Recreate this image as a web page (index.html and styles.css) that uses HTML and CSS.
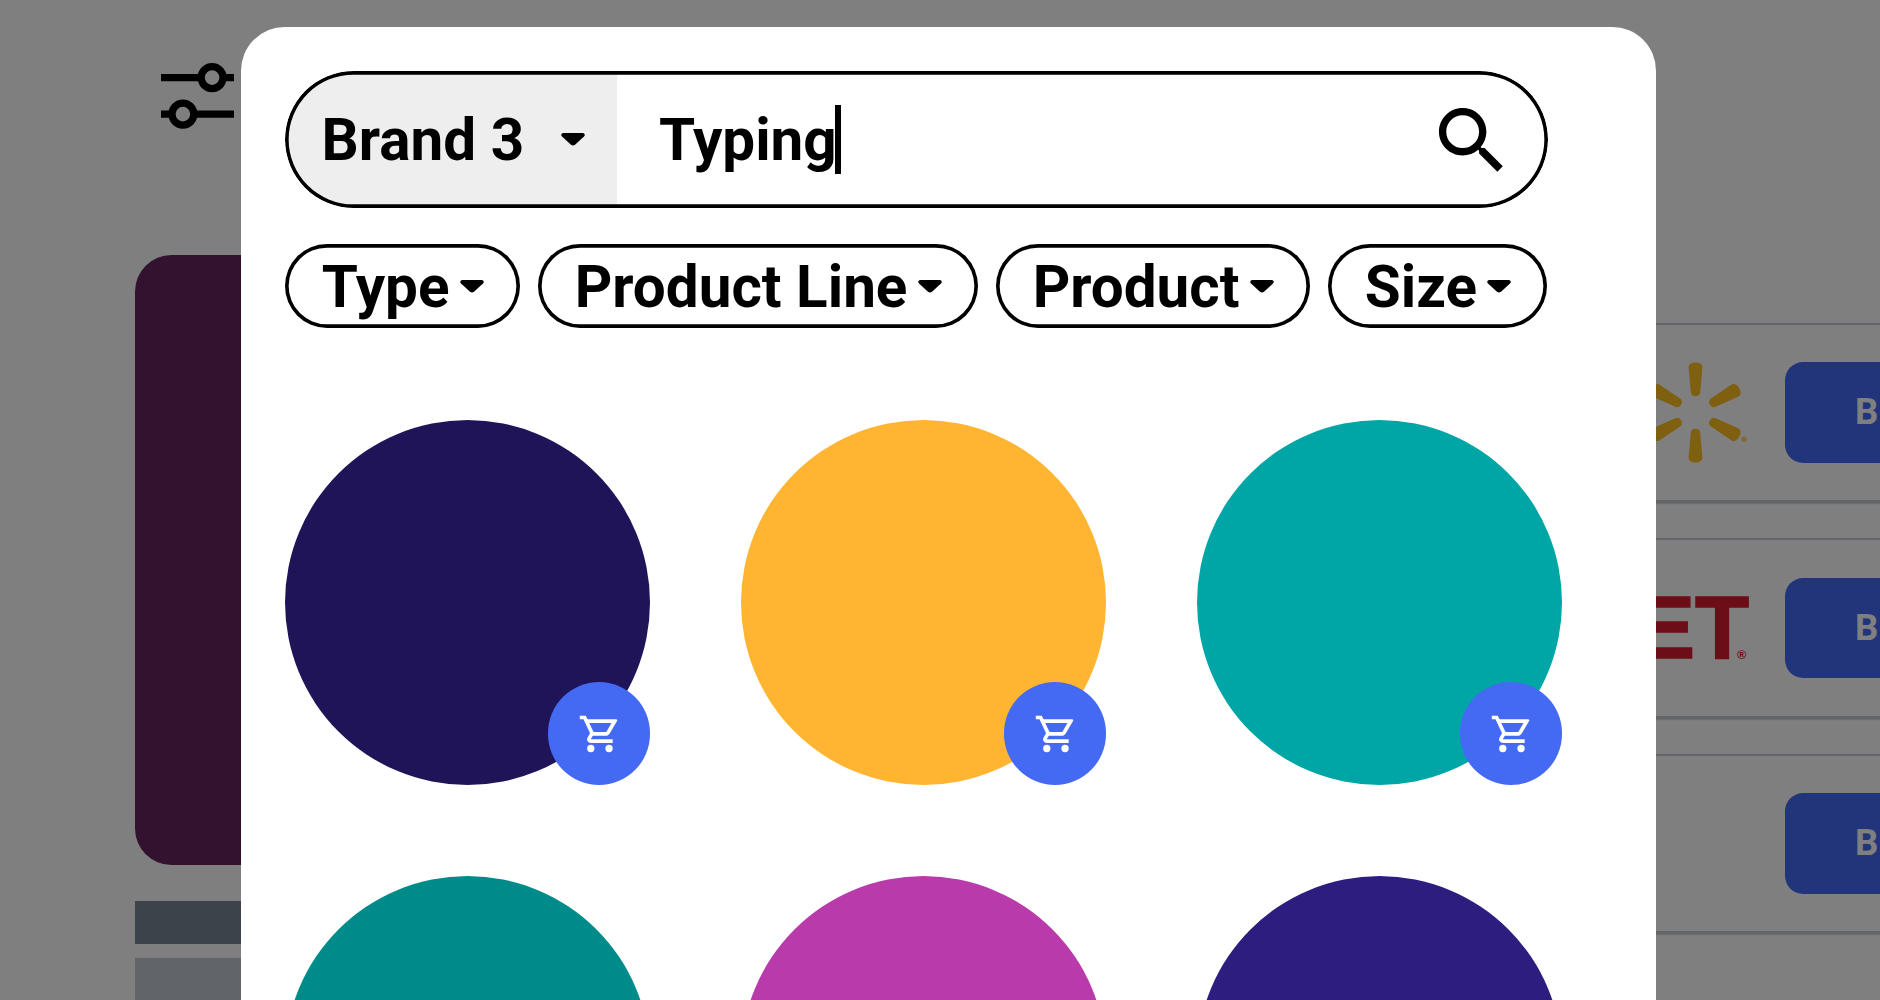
FILE: index.html
```html
<!DOCTYPE html>
<html lang="en">
<head>
<meta charset="utf-8">
<title>Product search</title>
<link rel="stylesheet" href="styles.css">
</head>
<body>
<svg class="defs" width="0" height="0" aria-hidden="true">
  <symbol id="cart" viewBox="0 0 24 24">
    <path fill-rule="evenodd" d="M1 2h3.27l.94 2H21Q21.900 4.300 21.400 5L17.300 11.970C16.960 12.590 16.300 13 15.550 13H8.100L7 15h12v2H7c-1.520 0-2.480-1.630-1.750-2.970l1.350-2.440L3 4H1zM6.160 6h12.150l-2.760 5H8.530z"/>
    <circle cx="7" cy="20" r="2"/><circle cx="17" cy="20" r="2"/>
  </symbol>
  <symbol id="caret" viewBox="0 0 24 13">
    <path d="M2 0H22Q24 .4 23.8 2.2L23 3.6 14 11.8Q12 13.4 10 11.8L1 3.6 .2 2.2Q0 .4 2 0z"/>
  </symbol>
</svg>
<div class="page">
  <aside class="sidebar">
    <svg class="tune" viewBox="0 0 20 18" fill="none" stroke="#000" stroke-width="2">
      <path d="M0 4H11M17 4H20M0 14H3M9 14H20"/><circle cx="14" cy="4" r="3"/><circle cx="6" cy="14" r="3"/>
    </svg>
    <div class="hero"></div>
    <div class="bar bar-dark"></div>
    <div class="bar bar-light"></div>
  </aside>
  <section class="stores">
    <div class="store">
      <svg class="spark" viewBox="-52 -52 104 104">
        <g id="pair"><path id="ray" d="M-7-46Q-6.500-50.500 0-50.500Q6.500-50.500 7-46L4.700-20Q4-16.500 0-16.500Q-4-16.500-4.700-20z"/><use href="#ray" transform="rotate(180)"/></g>
        <use href="#pair" transform="rotate(61)"/><use href="#pair" transform="rotate(-61)"/>
        <circle cx="49" cy="27" r="2.700" opacity=".65"/>
      </svg>
      <div class="buy">B</div>
    </div>
    <div class="store">
      <div class="brand">ET<span class="reg">®</span></div>
      <div class="buy">B</div>
    </div>
    <div class="store"><div class="buy">B</div></div>
  </section>
</div>
<div class="overlay">
  <main class="modal">
    <div class="search">
      <div class="scope"><span>Brand 3</span><svg class="caret"><use href="#caret"/></svg></div>
      <div class="query"><span>Typing</span><i class="cursor"></i></div>
      <svg class="lens" viewBox="0 0 24 24"><path d="M15.500 14h-.79l-.28-.27C15.410 12.590 16 11.110 16 9.500 16 5.910 13.090 3 9.500 3S3 5.910 3 9.500 5.910 16 9.500 16c1.610 0 3.090-.59 4.230-1.570l.27.28v.79l5 4.990L20.490 19l-4.990-5zm-6 0C7.010 14 5 11.990 5 9.500S7.010 5 9.500 5 14 7.010 14 9.500 11.990 14 9.500 14z"/></svg>
    </div>
    <div class="filters">
      <div class="pill">Type<svg class="caret"><use href="#caret"/></svg></div>
      <div class="pill">Product Line<svg class="caret"><use href="#caret"/></svg></div>
      <div class="pill">Product<svg class="caret"><use href="#caret"/></svg></div>
      <div class="pill">Size<svg class="caret"><use href="#caret"/></svg></div>
    </div>
    <div class="grid">
      <div class="swatch navy"><div class="add"><svg><use href="#cart"/></svg></div></div>
      <div class="swatch amber"><div class="add"><svg><use href="#cart"/></svg></div></div>
      <div class="swatch teal"><div class="add"><svg><use href="#cart"/></svg></div></div>
      <div class="swatch green"></div>
      <div class="swatch magenta"></div>
      <div class="swatch indigo"></div>
    </div>
  </main>
</div>
</body>
</html>
```
FILE: styles.css
```css
* { box-sizing: border-box; }
body {
  margin: 0;
  width: 1880px;
  height: 1000px;
  overflow: hidden;
  position: relative;
  background: #fff;
  font-family: Roboto, "Liberation Sans", sans-serif;
  font-weight: 700;
  color: #000;
}
svg { display: block; flex: none; }
.defs { position: absolute; }

.page { display: flex; height: 1000px; overflow: hidden; padding-left: 135.3px; }
.sidebar { width: 700px; flex: none; padding-top: 62.7px; }
.tune { width: 73px; height: 65.7px; margin-left: 25.7px; overflow: visible; }
.hero { height: 609.4px; margin-top: 127.1px; border-radius: 36.5px; background: #66245e; }
.bar { height: 42.2px; }
.bar-dark { margin-top: 36.5px; background: #7a8696; }
.bar-light { margin-top: 14.6px; background: #c2cbd2; }

.stores { flex: none; width: 1200px; padding-top: 323px; display: flex; flex-direction: column; gap: 35px; }
.store {
  height: 180.4px;
  display: flex;
  align-items: center;
  position: relative;
  border-top: 2px solid #c4cdd4;
  border-bottom: 3px solid #c4cdd4;
  box-shadow: 0 1px 1px #d8dcdf;
}
.buy {
  width: 240px;
  height: 100.5px;
  margin: 0 0 .4px 950px;
  padding-left: 69.7px;
  border-radius: 18.25px;
  background: #446af4;
  color: #fff;
  font-size: 36.5px;
  line-height: 100px;
}
.spark { width: 103px; height: 103px; fill: #ffc020; margin: 0 .5px 0 808.5px; overflow: visible; }
.spark + .buy { margin-left: 38px; }
.brand {
  width: 130px;
  height: 100px;
  margin-left: 784.7px;
  padding: 0 0 0 16px;
  color: #da1b2e;
  font: 700 88.5px/100px "Liberation Sans", sans-serif;
  -webkit-text-stroke: 1.5px #da1b2e;
  text-align: left;
  white-space: nowrap;
  position: relative;
}
.reg {
  position: absolute;
  left: 117px;
  top: 70px;
  font-size: 12.5px;
  line-height: 14px;
  -webkit-text-stroke: 0;
}
.brand + .buy { margin-left: 35.3px; }

.overlay {
  position: absolute;
  inset: 0;
  background: rgba(0, 0, 0, .5);
  padding: 27.3px 0 0 241.3px;
  overflow: hidden;
}
.modal {
  width: 1414.6px;
  height: 1100px;
  padding: 43.8px;
  border-radius: 43.8px;
  background: #fff;
}
.search {
  width: 1262.6px;
  height: 136.9px;
  display: flex;
  align-items: center;
  border-radius: 69px;
  overflow: hidden;
  font-size: 58.4px;
  line-height: 68px;
  position: relative;
}
.search::after, .pill::after {
  content: "";
  position: absolute;
  inset: 0;
  border-radius: inherit;
  box-shadow: inset 0 0 0 3.65px #000;
}
.scope {
  width: 331.9px;
  height: 100%;
  padding: 0 31.5px 0 36.5px;
  display: flex;
  align-items: center;
  justify-content: space-between;
  background: #eee;
}
.caret { width: 24px; height: 13px; }
.query { flex: 1; padding-left: 42px; display: flex; align-items: center; }
.cursor { width: 6px; height: 69.5px; margin-left: -2.2px; background: #000; }
.lens { width: 87.6px; height: 87.6px; margin: 2px 31.8px 0 0; }

.filters { display: flex; gap: 18.25px; margin-top: 36.4px; }
.pill {
  height: 84px;
  display: flex;
  align-items: center;
  gap: 10.3px;
  padding: 1px 36px 0 36.7px;
  border-radius: 42px;
  font-size: 58.4px;
  line-height: 84px;
  white-space: nowrap;
  position: relative;
}

.grid { display: grid; grid-template-columns: repeat(3, 365px); gap: 91.25px 91px; margin-top: 91.3px; }
.swatch { height: 365px; border-radius: 50%; display: flex; align-items: flex-end; justify-content: flex-end; }
.add {
  width: 102.2px;
  height: 102.2px;
  border-radius: 50%;
  background: #446af4;
  display: flex;
  align-items: center;
  justify-content: center;
  padding-left: 2.5px;
}
.add svg { width: 43.8px; height: 43.8px; fill: #fff; }
.navy { background: #201458; }
.amber { background: #ffb531; }
.teal { background: #00a6a6; }
.green { background: #008b8b; }
.magenta { background: #b93aab; }
.indigo { background: #2c1d7f; }
```
